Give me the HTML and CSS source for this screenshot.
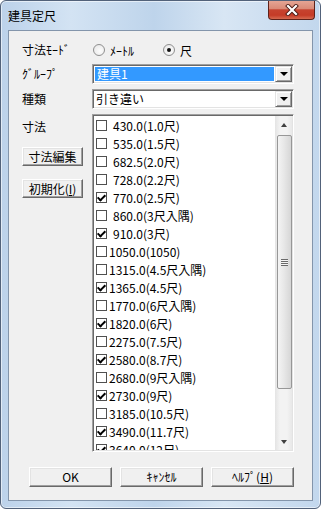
FILE: index.html
```html
<!DOCTYPE html>
<html lang="ja">
<head>
    <meta charset="UTF-8">
    <title>建具定尺</title>
    <link rel="stylesheet" href="styles.css">
</head>
<body>
    <div class="window">
        <div class="titlebar">
            <span class="title">建具定尺</span>
            <div class="close-btn">
                <svg width="14" height="12" viewBox="0 0 14 12">
                    <path d="M3 2 L11 10 M11 2 L3 10" stroke="#4a1a14" stroke-width="4" stroke-linecap="square"/>
                    <path d="M3 2 L11 10 M11 2 L3 10" stroke="#fff" stroke-width="2.2" stroke-linecap="square"/>
                </svg>
            </div>
        </div>

        <div class="client">
            <div class="form">
                <div class="label">寸法ﾓｰﾄﾞ</div>
                <div class="radios">
                    <span class="radio-opt"><span class="radio"></span>ﾒｰﾄﾙ</span>
                    <span class="radio-opt"><span class="radio checked"></span>尺</span>
                </div>

                <div class="label">ｸﾞﾙｰﾌﾟ</div>
                <div class="combo">
                    <div class="combo-text selected">建具1</div>
                    <div class="combo-btn"><i class="arrow-down"></i></div>
                </div>

                <div class="label">種類</div>
                <div class="combo">
                    <div class="combo-text">引き違い</div>
                    <div class="combo-btn"><i class="arrow-down"></i></div>
                </div>

                <div class="side">
                    <div class="label">寸法</div>
                    <button class="btn side-btn">寸法編集</button>
                    <button class="btn side-btn second">初期化(<u>I</u>)</button>
                </div>

                <div class="listbox">
                    <div class="items">
                        <div class="item"><span class="check"></span><span class="sp">430.0(1.0尺)</span></div>
                        <div class="item"><span class="check"></span><span class="sp">535.0(1.5尺)</span></div>
                        <div class="item"><span class="check"></span><span class="sp">682.5(2.0尺)</span></div>
                        <div class="item"><span class="check"></span><span class="sp">728.0(2.2尺)</span></div>
                        <div class="item"><span class="check on"></span><span class="sp">770.0(2.5尺)</span></div>
                        <div class="item"><span class="check"></span><span class="sp">860.0(3尺入隅)</span></div>
                        <div class="item"><span class="check on"></span><span class="sp">910.0(3尺)</span></div>
                        <div class="item"><span class="check"></span><span>1050.0(1050)</span></div>
                        <div class="item"><span class="check"></span><span>1315.0(4.5尺入隅)</span></div>
                        <div class="item"><span class="check on"></span><span>1365.0(4.5尺)</span></div>
                        <div class="item"><span class="check"></span><span>1770.0(6尺入隅)</span></div>
                        <div class="item"><span class="check on"></span><span>1820.0(6尺)</span></div>
                        <div class="item"><span class="check"></span><span>2275.0(7.5尺)</span></div>
                        <div class="item"><span class="check on"></span><span>2580.0(8.7尺)</span></div>
                        <div class="item"><span class="check"></span><span>2680.0(9尺入隅)</span></div>
                        <div class="item"><span class="check on"></span><span>2730.0(9尺)</span></div>
                        <div class="item"><span class="check"></span><span>3185.0(10.5尺)</span></div>
                        <div class="item"><span class="check on"></span><span>3490.0(11.7尺)</span></div>
                        <div class="item"><span class="check on"></span><span>3640.0(12尺)</span></div>
                    </div>
                    <div class="scrollbar">
                        <div class="sb-btn"><i class="arrow-up"></i></div>
                        <div class="sb-thumb"><div class="grip"></div></div>
                        <div class="sb-track"></div>
                        <div class="sb-btn"><i class="arrow-dn"></i></div>
                    </div>
                </div>
            </div>

            <div class="actions">
                <button class="btn act-btn">OK</button>
                <button class="btn act-btn">ｷｬﾝｾﾙ</button>
                <button class="btn act-btn">ﾍﾙﾌﾟ(<u>H</u>)</button>
            </div>
        </div>
    </div>
</body>
</html>
```

FILE: styles.css
```css
body {
    margin: 0;
    font-family: "Noto Sans CJK JP", sans-serif;
    font-size: 12px;
    color: #000;
}

.window {
    box-sizing: border-box;
    width: 321px;
    height: 509px;
    border: 1px solid #52627a;
    border-radius: 6px;
    background: linear-gradient(to right, #bcd2ea 0%, #d3e3f3 22%, #bed4eb 48%, #d8e6f4 70%, #c2d7ed 100%);
    box-shadow: inset 0 0 0 1px rgba(255, 255, 255, 0.55);
    display: flex;
    flex-direction: column;
    overflow: hidden;
}

.titlebar {
    height: 29px;
    display: flex;
    align-items: center;
    padding-left: 7px;
}

.title {
    line-height: 16px;
}

.close-btn {
    margin-left: auto;
    margin-right: 5px;
    margin-top: -1px;
    align-self: flex-start;
    box-sizing: border-box;
    width: 47px;
    height: 20px;
    border: 1px solid #5e2119;
    border-top: none;
    border-radius: 0 0 4px 4px;
    background: linear-gradient(to bottom, #e6a898 0%, #da8a77 45%, #c6432f 52%, #c53b27 80%, #d66a50 100%);
    display: flex;
    align-items: center;
    justify-content: center;
}

.client {
    flex: 1;
    margin: 0 7px 7px 7px;
    border: 1px solid #8395ab;
    background: #f0f0f0;
    display: flex;
    flex-direction: column;
}

.form {
    display: grid;
    grid-template-columns: 70px 202px;
    grid-template-rows: 18px 20px 20px 338px;
    row-gap: 5px;
    padding: 10px 0 0 13px;
}

.label {
    display: flex;
    align-items: center;
    line-height: 16px;
}

.radios {
    display: flex;
    align-items: center;
    padding-left: 1px;
}

.radio-opt {
    display: flex;
    align-items: center;
    width: 70px;
}

.radio {
    box-sizing: border-box;
    width: 12px;
    height: 12px;
    border: 1px solid #8f8f8f;
    border-radius: 50%;
    background: radial-gradient(circle at 60% 60%, #fdfdfd 0%, #e4e4e4 100%);
    margin-right: 5px;
    display: flex;
    align-items: center;
    justify-content: center;
}

.radio.checked::after {
    content: "";
    width: 4px;
    height: 4px;
    border-radius: 50%;
    background: #111;
}

.combo {
    box-sizing: border-box;
    height: 20px;
    border: 1px solid;
    border-color: #a0a0a0 #fff #fff #a0a0a0;
    box-shadow: inset 1px 1px #696969, inset -1px -1px #e3e3e3;
    background: #fff;
    padding: 1px;
    display: flex;
}

.combo-text {
    flex: 1;
    padding-left: 2px;
    line-height: 16px;
    margin: 0 1px 0 0;
}

.combo-text.selected {
    background: #3399ff;
    color: #fff;
    margin: 1px 1px 1px 1px;
    line-height: 14px;
}

.combo-btn {
    box-sizing: border-box;
    width: 17px;
    background: #f0f0f0;
    border: 1px solid;
    border-color: #e3e3e3 #696969 #696969 #e3e3e3;
    box-shadow: inset 1px 1px #fff, inset -1px -1px #a0a0a0;
    display: flex;
    align-items: center;
    justify-content: center;
}

.arrow-down {
    width: 0;
    height: 0;
    border-top: 4px solid #000;
    border-left: 4px solid transparent;
    border-right: 4px solid transparent;
}

.side {
    display: flex;
    flex-direction: column;
    align-items: flex-start;
}

.side .label {
    height: 18px;
    margin-top: 4px;
}

.btn {
    box-sizing: border-box;
    font: inherit;
    color: #000;
    padding: 0;
    background: #f0f0f0;
    border: 1px solid;
    border-color: #fff #696969 #696969 #fff;
    box-shadow: inset -1px -1px #a0a0a0, inset 1px 1px #e3e3e3;
    display: flex;
    align-items: center;
    justify-content: center;
    line-height: 14px;
}

.side-btn {
    width: 61px;
    height: 19px;
    margin-top: 11px;
}

.side-btn.second {
    margin-top: 13px;
}

.listbox {
    box-sizing: border-box;
    border: 1px solid;
    border-color: #a0a0a0 #fff #fff #a0a0a0;
    box-shadow: inset 1px 1px #696969, inset -1px -1px #e3e3e3;
    background: #fff;
    padding: 1px;
    display: flex;
    overflow: hidden;
}

.items {
    flex: 1;
    padding-left: 2px;
    overflow: hidden;
}

.item {
    height: 18px;
    display: flex;
    align-items: center;
    white-space: nowrap;
}

.check {
    position: relative;
    flex: none;
    box-sizing: border-box;
    width: 11px;
    height: 11px;
    border: 1px solid #505050;
    background: #fff;
    margin-right: 2px;
}

.check.on::after {
    content: "";
    position: absolute;
    left: 2px;
    top: 0;
    width: 3px;
    height: 6px;
    border: solid #000;
    border-width: 0 2px 2px 0;
    transform: rotate(45deg);
}

.sp {
    margin-left: 4px;
}

.scrollbar {
    width: 17px;
    display: flex;
    flex-direction: column;
    background: linear-gradient(to right, #e4e4e4, #f3f3f3 30%, #f3f3f3 70%, #e8e8e8);
}

.sb-btn {
    height: 17px;
    flex: none;
    display: flex;
    align-items: center;
    justify-content: center;
}

.arrow-up,
.arrow-dn {
    width: 0;
    height: 0;
    border-left: 3.5px solid transparent;
    border-right: 3.5px solid transparent;
}

.arrow-up {
    border-bottom: 4px solid #404040;
}

.arrow-dn {
    border-top: 4px solid #404040;
}

.sb-thumb {
    flex: none;
    box-sizing: border-box;
    height: 254px;
    margin: 2px 0 0 2px;
    border: 1px solid #979797;
    border-radius: 2px;
    background: linear-gradient(to right, #f4f4f4, #e6e6e6 50%, #d6d6d6);
    display: flex;
    align-items: center;
    justify-content: center;
}

.grip {
    width: 7px;
    height: 7px;
    background: repeating-linear-gradient(to bottom, #6a6a6a 0 1px, #f5f5f5 1px 2px);
}

.sb-track {
    flex: 1;
}

.actions {
    display: flex;
    gap: 8px;
    padding-left: 20px;
    margin-top: 15px;
}

.act-btn {
    width: 83px;
    height: 20px;
}
```
